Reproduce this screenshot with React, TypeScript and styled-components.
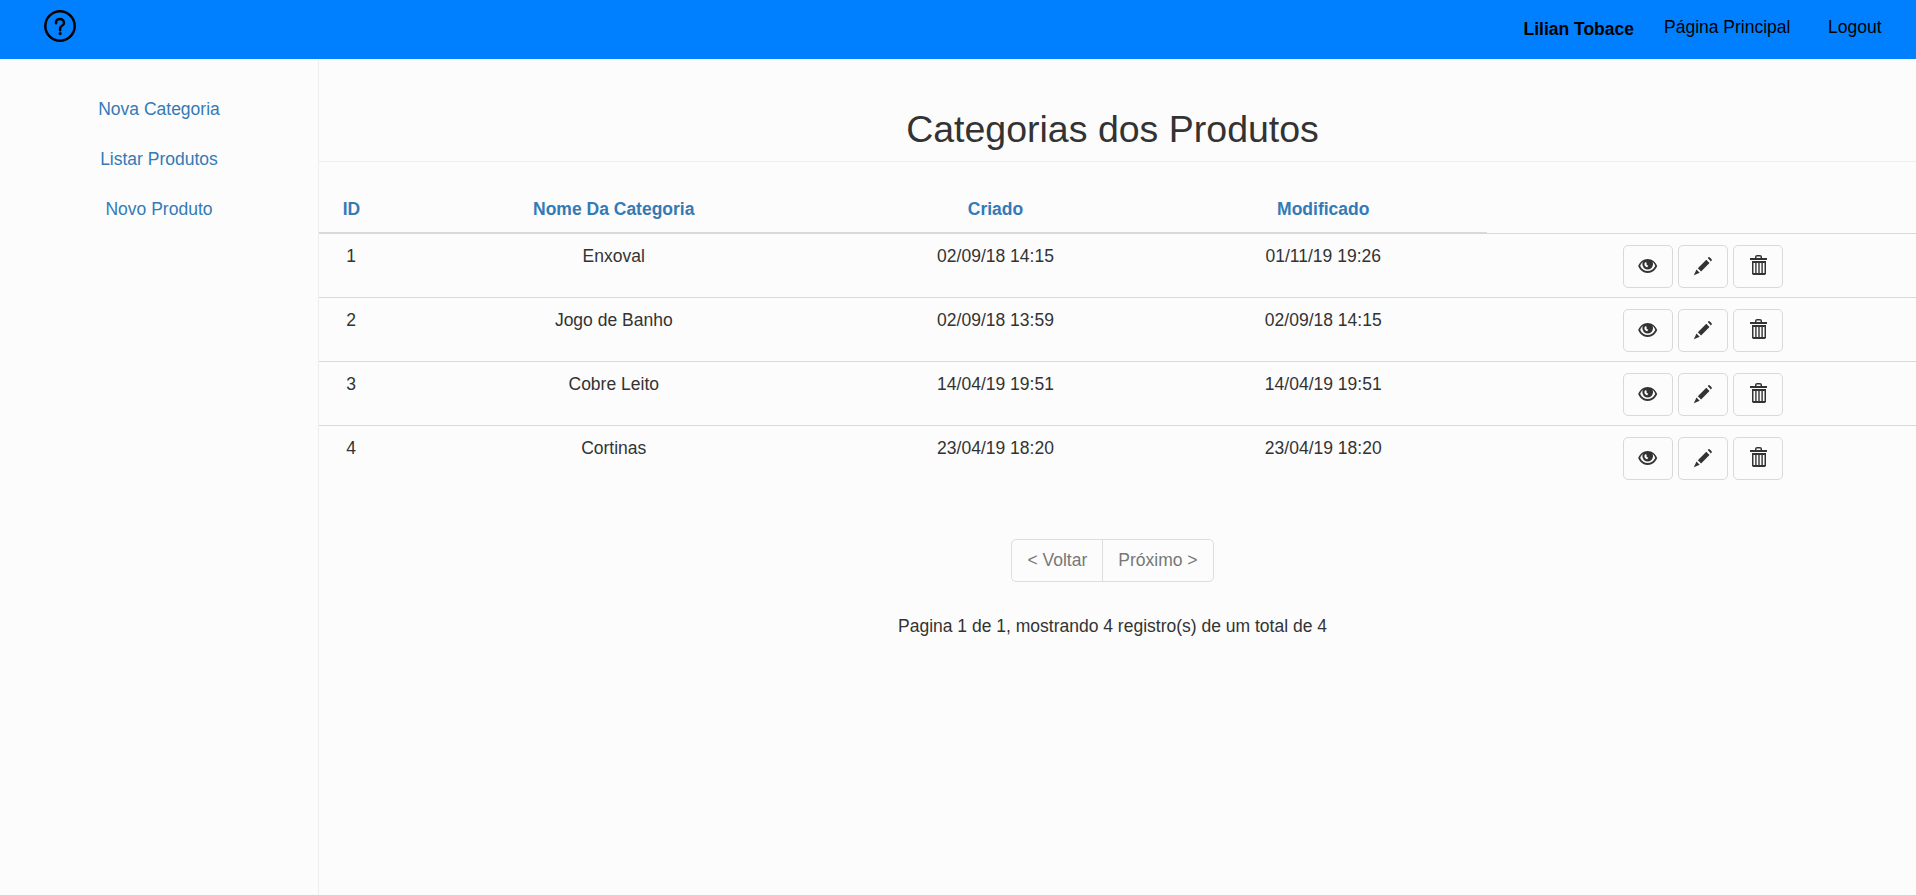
import React from "react";
import styled, { createGlobalStyle } from "styled-components";

const GlobalStyle = createGlobalStyle`
  *, *::before, *::after { box-sizing: border-box; }
  body {
    margin: 0;
    background: #fcfcfc;
    color: #333;
    font-family: "Liberation Sans", Arial, sans-serif;
    font-size: 17.5px;
    line-height: 25px;
  }
`;

const Page = styled.div`
  display: flex;
  flex-direction: column;
  min-height: 100vh;
`;

const TopBar = styled.header`
  display: flex;
  align-items: flex-start;
  justify-content: space-between;
  height: 59px;
  padding: 10px 34.5px 0 44px;
  background: #0080ff;
  color: #000;
`;

const HelpIcon = styled.svg`
  display: block;
  width: 32px;
  height: 32px;
`;

const TopNav = styled.nav`
  display: flex;
  padding-top: 5px;
`;

const UserName = styled.strong`
  padding-top: 2px;
  margin-right: 30px;
`;

const TopLink = styled.a`
  color: #000;
  text-decoration: none;
  & + & { margin-left: 37.5px; }
`;

const Body = styled.div`
  display: flex;
  flex: 1;
  padding-top: 1px;
`;

const Sidebar = styled.aside`
  display: flex;
  flex-direction: column;
  align-items: center;
  gap: 25px;
  width: 319px;
  padding-top: 37px;
  border-right: 1px solid #eee;
`;

const SideLink = styled.a`
  color: #337ab7;
  text-decoration: none;
`;

const Main = styled.main`
  flex: 1;
  min-width: 0;
  padding-top: 48px;
`;

const Title = styled.h2`
  margin: 0 0 25px;
  height: 54px;
  padding: 1px 10px 0 0;
  border-bottom: 1px solid #eee;
  font-size: 37.5px;
  font-weight: 400;
  line-height: 41.25px;
  text-align: center;
`;

const Table = styled.div`
  display: flex;
  flex-direction: column;
  text-align: center;
`;

const columns = "77px 435.5px 328px 327.5px 1fr";

const HeadRow = styled.div`
  display: grid;
  grid-template-columns: ${columns};
  height: 46px;
`;

const HeadCell = styled.div<{ $first?: boolean }>`
  padding: 10px ${(p) => (p.$first ? "12px" : "0")} 0 0;
  border-bottom: 1px solid #d9d9d9;
  color: #337ab7;
  font-weight: 700;
`;

const Row = styled.div`
  display: grid;
  grid-template-columns: ${columns};
  height: 64px;
  border-top: 1px solid #d9d9d9;
`;

const Cell = styled.div<{ $first?: boolean }>`
  padding: 10px ${(p) => (p.$first ? "13px" : "0")} 0 0;
`;

const Actions = styled.div`
  display: flex;
  justify-content: center;
  gap: 5px;
  padding: 11px 0 0 3px;
`;

const IconButton = styled.button`
  display: flex;
  align-items: center;
  justify-content: center;
  width: 50px;
  height: 43px;
  padding: 0;
  border: 1px solid #d9d9d9;
  border-radius: 5px;
  background: transparent;
  color: #333;

  svg { display: block; }
`;

const PagerArea = styled.div`
  display: flex;
  flex-direction: column;
  align-items: center;
  gap: 32px;
  padding: 50px 10px 0 0;
`;

const Pagination = styled.div`
  display: flex;
  height: 43px;
  border: 1px solid #ddd;
  border-radius: 5px;
`;

const PageLink = styled.a`
  padding: 8px 15px;
  color: #777;
  & + & { border-left: 1px solid #ddd; }
`;

const Summary = styled.p`
  margin: 0;
`;

const EyeIcon = () => (
  <svg width="20" height="21" viewBox="0 0 20 21">
    <path
      fill="currentColor"
      fillRule="evenodd"
      d="M9.700 3C5.200 3 1.900 6.200 .2 10C1.900 13.800 5.200 17 9.700 17S17.500 13.800 19.200 10C17.500 6.200 14.200 3 9.700 3ZM4.800 6C4.300 7.400 4.300 8.600 4.600 9.500C5.300 12.200 7.200 13.600 9.700 13.600S14.100 12.200 14.800 9.500C15.100 8.600 15.100 7.400 14.600 6C15.800 6.900 16.700 8.200 17.200 9.900C15.500 13.200 13 15 9.700 15S3.900 13.200 2.200 9.900C2.700 8.200 3.600 6.900 4.800 6ZM7 6.300C5.900 8.400 6.600 10.900 9.300 11.200L10.300 9.700C8.600 9.600 8.200 8.200 8.800 6.800Z"
    />
  </svg>
);

const PencilIcon = () => (
  <svg width="20" height="21" viewBox="0 0 20 21" fill="currentColor">
    <path d="M14.700 2L15.500 1.200Q16.200 .8 16.900 1.400L18.600 3.200Q19.200 3.900 18.700 4.600L17.900 5.400ZM13.300 3.700L16.500 7L8.100 15.600L4.800 12.300ZM3.500 13.600L6.700 16.700L.8 19.300Z" />
  </svg>
);

const TrashIcon = () => (
  <svg width="24" height="23" viewBox="0 0 24 23">
    <path
      fill="currentColor"
      fillRule="evenodd"
      d="M9 3V1.800Q9.200 0 11 0H14Q15.900 0 16 1.800V3H21V5H4V3ZM10.500 3H14.500V1.500H10.500ZM6 6H20V18.800L19 20H7L6 18.800ZM7.500 8V18H9.200V8ZM10.600 8V18H12.300V8ZM13.700 8V18H15.400V8ZM16.800 8V18H18.500V8Z"
    />
  </svg>
);

const categories = [
  { id: 1, name: "Enxoval", created: "02/09/18 14:15", modified: "01/11/19 19:26" },
  { id: 2, name: "Jogo de Banho", created: "02/09/18 13:59", modified: "02/09/18 14:15" },
  { id: 3, name: "Cobre Leito", created: "14/04/19 19:51", modified: "14/04/19 19:51" },
  { id: 4, name: "Cortinas", created: "23/04/19 18:20", modified: "23/04/19 18:20" },
];

export default function App() {
  return (
    <>
      <GlobalStyle />
      <Page>
        <TopBar>
          <HelpIcon viewBox="0 0 32 32" fill="none" stroke="#000" strokeWidth="2.500">
            <circle cx="16" cy="16" r="14.700" />
            <path d="M12 13.200V12.700C12 10.500 13.700 9.100 16 9.100S20 10.700 20 12.900C20 15.900 16.100 15.600 16.100 18.200V20.300" strokeLinecap="round" />
            <circle cx="16.100" cy="23.600" r="1.600" fill="#000" stroke="none" />
          </HelpIcon>
          <TopNav>
            <UserName>Lilian Tobace</UserName>
            <TopLink>Página Principal</TopLink>
            <TopLink>Logout</TopLink>
          </TopNav>
        </TopBar>
        <Body>
          <Sidebar>
            <SideLink>Nova Categoria</SideLink>
            <SideLink>Listar Produtos</SideLink>
            <SideLink>Novo Produto</SideLink>
          </Sidebar>
          <Main>
            <Title>Categorias dos Produtos</Title>
            <Table>
              <HeadRow>
                <HeadCell $first>ID</HeadCell>
                <HeadCell>Nome Da Categoria</HeadCell>
                <HeadCell>Criado</HeadCell>
                <HeadCell>Modificado</HeadCell>
              </HeadRow>
              {categories.map((c) => (
                <Row key={c.id}>
                  <Cell $first>{c.id}</Cell>
                  <Cell>{c.name}</Cell>
                  <Cell>{c.created}</Cell>
                  <Cell>{c.modified}</Cell>
                  <Actions>
                    <IconButton aria-label="Ver"><EyeIcon /></IconButton>
                    <IconButton aria-label="Editar"><PencilIcon /></IconButton>
                    <IconButton aria-label="Excluir"><TrashIcon /></IconButton>
                  </Actions>
                </Row>
              ))}
            </Table>
            <PagerArea>
              <Pagination>
                <PageLink>&lt; Voltar</PageLink>
                <PageLink>Próximo &gt;</PageLink>
              </Pagination>
              <Summary>Pagina 1 de 1, mostrando 4 registro(s) de um total de 4</Summary>
            </PagerArea>
          </Main>
        </Body>
      </Page>
    </>
  );
}
